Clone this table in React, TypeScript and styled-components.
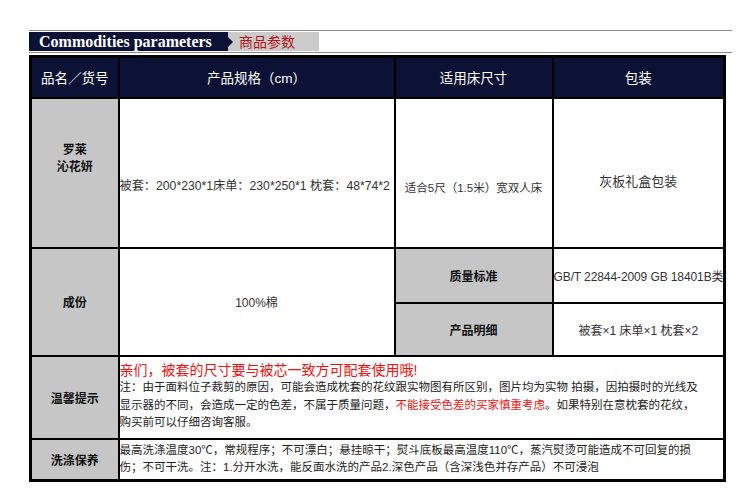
import React from 'react';
import styled, {createGlobalStyle} from 'styled-components';

const GlobalStyle = createGlobalStyle`
    body {
        margin: 0;
        background: #ffffff;
        font-family: 'Liberation Sans', 'Noto Sans CJK SC', sans-serif;
    }
`

const navy = '#0c1235';
const label = '#c6c6c6';

export default function App() {
    return (
        <>
            <GlobalStyle/>
            <Page>
                <TitleBar>
                    <TitleEn>Commodities parameters</TitleEn>
                    <TitleCn>商品参数</TitleCn>
                </TitleBar>
                <Table>
                    <colgroup>
                        <col style={{width: 88}}/>
                        <col style={{width: 276}}/>
                        <col style={{width: 158}}/>
                        <col style={{width: 172}}/>
                    </colgroup>
                    <tbody>
                    <HeadRow>
                        <HeadCell>品名／货号</HeadCell>
                        <HeadCell>产品规格（cm）</HeadCell>
                        <HeadCell>适用床尺寸</HeadCell>
                        <HeadCell>包装</HeadCell>
                    </HeadRow>
                    <Row $h={150}>
                        <LabelCell><Brand>罗莱<br/>沁花妍</Brand></LabelCell>
                        <Cell $align="left"><Shift $y={12} $size={12.2}>被套：200*230*1床单：230*250*1 枕套：48*74*2</Shift></Cell>
                        <Cell><Shift $y={14} $size={11.5}>适合5尺（1.5米）宽双人床</Shift></Cell>
                        <Cell><Shift $y={8} $size={13}>灰板礼盒包装</Shift></Cell>
                    </Row>
                    <Row $h={55}>
                        <LabelCell rowSpan={2}>成份</LabelCell>
                        <Cell rowSpan={2}>100%棉</Cell>
                        <LabelCell>质量标准</LabelCell>
                        <Cell $tight>GB/T 22844-2009 GB 18401B类</Cell>
                    </Row>
                    <Row $h={53}>
                        <LabelCell>产品明细</LabelCell>
                        <Cell>被套×1 床单×1 枕套×2</Cell>
                    </Row>
                    <Row $h={83}>
                        <LabelCell>温馨提示</LabelCell>
                        <Cell colSpan={3} $align="left">
                            <Notice>亲们，被套的尺寸要与被芯一致方可配套使用哦!</Notice>
                            <Note>
                                注：由于面料位子裁剪的原因，可能会造成枕套的花纹跟实物图有所区别，图片均为实物 拍摄，因拍摄时的光线及<br/>
                                显示器的不同，会造成一定的色差，不属于质量问题，<Red>不能接受色差的买家慎重考虑</Red>。如果特别在意枕套的花纹，<br/>
                                购买前可以仔细咨询客服。
                            </Note>
                        </Cell>
                    </Row>
                    <Row $h={42}>
                        <LabelCell>洗涤保养</LabelCell>
                        <Cell colSpan={3} $align="left">
                            <Note>
                                最高洗涤温度30℃，常规程序；不可漂白；悬挂晾干；熨斗底板最高温度110℃，蒸汽熨烫可能造成不可回复的损<br/>
                                伤；不可干洗。注：1.分开水洗，能反面水洗的产品2.深色产品（含深浅色并存产品）不可浸泡
                            </Note>
                        </Cell>
                    </Row>
                    </tbody>
                </Table>
            </Page>
        </>
    );
}

const Page = styled.div`
    padding: 30px 0 0 29px;
    width: 703px;
`
const TitleBar = styled.div`
    display: flex;
    align-items: stretch;
    height: 19px;
    padding: 1px 0;
    border-top: 1px solid #8a8a8a;
    border-bottom: 1px solid #8a8a8a;
`
const TitleEn = styled.div`
    position: relative;
    width: 199px;
    padding-left: 10px;
    box-sizing: border-box;
    background: ${navy};
    color: #ffffff;
    font-family: 'Liberation Serif', serif;
    font-weight: bold;
    font-size: 16px;
    line-height: 19px;
    white-space: nowrap;

    &::after {
        content: '';
        position: absolute;
        right: -5px;
        top: 5px;
        border-left: 5px solid ${navy};
        border-top: 5px solid transparent;
        border-bottom: 5px solid transparent;
    }
`
const TitleCn = styled.div`
    width: 91px;
    padding-left: 11px;
    box-sizing: border-box;
    background: #cbcbcb;
    color: #b3141c;
    font-family: 'Noto Sans CJK SC', sans-serif;
    font-size: 14px;
    line-height: 19px;
`
const Table = styled.table`
    margin-top: 2px;
    width: 694px;
    table-layout: fixed;
    border-collapse: collapse;
    border: 3px solid #000;
`
const HeadRow = styled.tr`
    height: 41px;
    background: ${navy};
`
const HeadCell = styled.th`
    border: 2px solid #000;
    color: #ffffff;
    font-weight: normal;
    font-size: 13.5px;
    text-align: center;
    padding: 0;
`
const Row = styled.tr<{$h: number}>`
    height: ${p => p.$h}px;
`
const Cell = styled.td<{$align?: string, $tight?: boolean}>`
    border: 2px solid #000;
    background: #ffffff;
    color: #333;
    font-size: 12px;
    text-align: ${p => p.$align || 'center'};
    padding: 0;
    white-space: nowrap;
    overflow: hidden;
    letter-spacing: ${p => p.$tight ? '-0.1px' : '0'};
`
const LabelCell = styled.td`
    border: 2px solid #000;
    background: ${label};
    color: #111;
    font-weight: bold;
    font-size: 12px;
    text-align: center;
    padding: 0;
`
const Brand = styled.div`
    line-height: 17px;
    padding-bottom: 28px;
`
const Shift = styled.span<{$y: number, $size?: number}>`
    position: relative;
    top: ${p => p.$y}px;
    font-size: ${p => p.$size || 12}px;
`
const Notice = styled.div`
    color: #f01010;
    font-size: 14px;
    line-height: 17px;
`
const Note = styled.div`
    color: #222;
    font-size: 11.5px;
    line-height: 17.5px;
`
const Red = styled.span`
    color: #f01010;
`
